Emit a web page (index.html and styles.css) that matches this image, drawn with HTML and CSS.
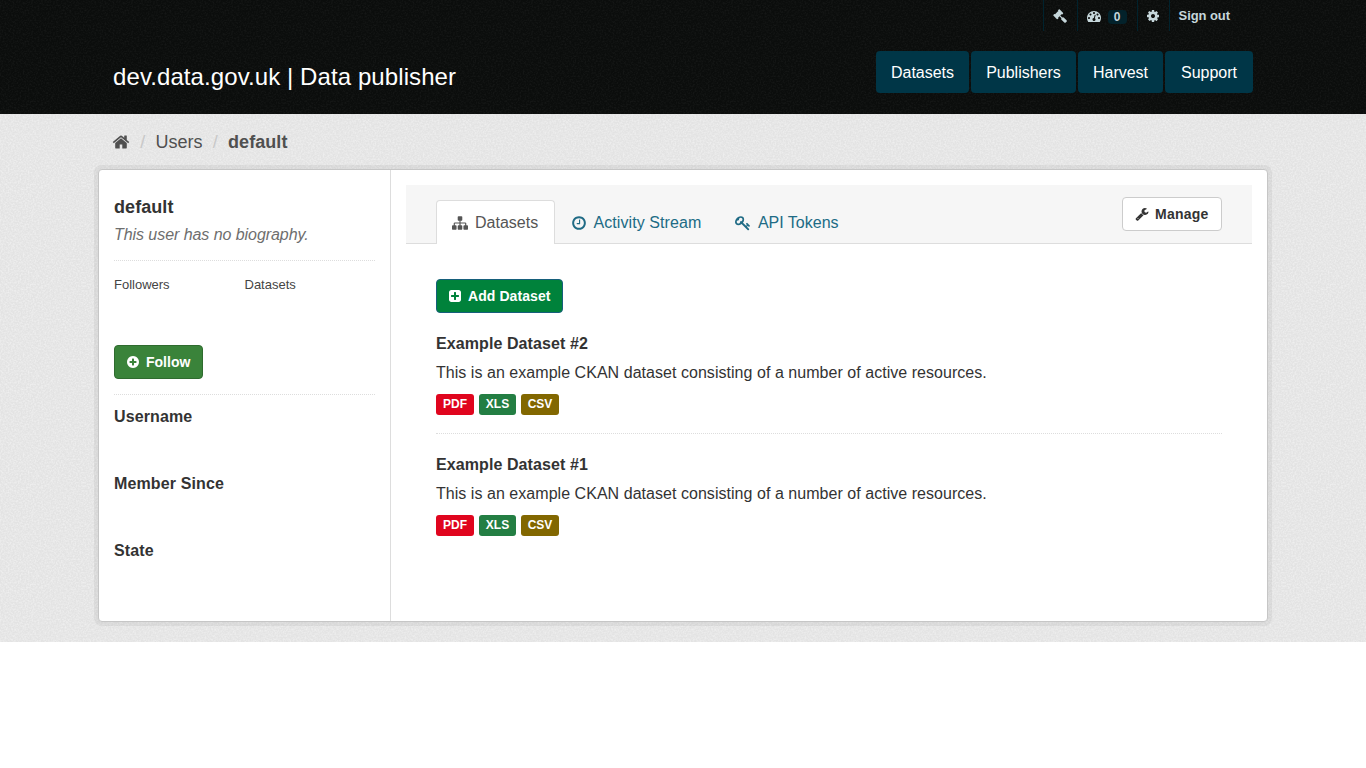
FILE: index.html
```html
<!DOCTYPE html>
<html lang="en">
<head>
<meta charset="utf-8">
<title>default - Users - dev.data.gov.uk | Data publisher</title>
<link rel="stylesheet" href="styles.css">
</head>
<body>
<div class="account">
  <ul class="container account-links">
    <li><a><svg class="icon i14" viewBox="0 0 1792 1792"><path d="M1771 1536q0 53-37 90l-107 108q-39 37-91 37-53 0-90-37l-363-364q-38-36-38-90 0-53 43-96l-256-256-126 126q-14 14-34 14t-34-14q2 2 12.500 12t12.500 13 10 11.500 10 13.500 6 13.500 5.500 16.500 1.500 18q0 38-28 68-3 3-16.500 18t-19 20.500-18.500 16.500-22 15.500-22 9-26 4.500q-40 0-68-28l-408-408q-28-28-28-68 0-13 4.500-26t9-22 15.500-22 16.500-18.500 20.500-19 18-16.500q30-28 68-28 10 0 18 1.500t16.500 5.500 13.500 6 13.500 10 11.500 10 13 12.500 12 12.500q-14-14-14-34t14-34l348-348q14-14 34-14t34 14q-2-2-12.500-12t-12.500-13-10-11.500-10-13.500-6-13.500-5.500-16.500-1.500-18q0-38 28-68 3-3 16.500-18t19-20.500 18.500-16.500 22-15.500 22-9 26-4.500q40 0 68 28l408 408q28 28 28 68 0 13-4.500 26t-9 22-15.500 22-16.500 18.500-20.500 19-18 16.500q-30 28-68 28-10 0-18-1.500t-16.500-5.500-13.500-6-13.500-10-11.500-10-13-12.500-12-12.500q14 14 14 34t-14 34l-126 126 256 256q43-43 96-43 52 0 91 37l363 363q37 39 37 91z"/></svg></a></li>
    <li class="dash"><a><svg class="icon i14" viewBox="0 0 1792 1792"><path d="M384 1152q0-53-37.500-90.500t-90.500-37.500-90.500 37.500-37.500 90.500 37.500 90.500 90.500 37.500 90.500-37.500 37.500-90.500zm192-448q0-53-37.500-90.500t-90.500-37.500-90.500 37.500-37.500 90.500 37.500 90.500 90.500 37.500 90.500-37.500 37.500-90.500zm428 481l101-382q6-26-7.500-48.500t-38.500-29.500-48 6.500-30 39.500l-101 382q-60 5-107 43.500t-63 98.500q-20 77 20 146t117 89 146-20 89-117q16-60-6-117t-72-91zm660-33q0-53-37.500-90.500t-90.500-37.500-90.500 37.500-37.500 90.500 37.500 90.500 90.500 37.500 90.500-37.500 37.500-90.500zm-640-640q0-53-37.500-90.500t-90.500-37.500-90.500 37.500-37.500 90.500 37.500 90.500 90.500 37.500 90.500-37.500 37.500-90.500zm448 192q0-53-37.500-90.500t-90.500-37.500-90.500 37.500-37.500 90.500 37.500 90.500 90.500 37.500 90.500-37.500 37.500-90.500zm320 448q0 261-141 483-19 29-54 29h-1402q-35 0-54-29-141-221-141-483 0-182 71-348t191-286 286-191 348-71 348 71 286 191 191 286 71 348z"/></svg><span class="count">0</span></a></li>
    <li class="settings"><a><svg class="icon i14" viewBox="0 0 1792 1792"><path d="M1152 896q0-106-75-181t-181-75-181 75-75 181 75 181 181 75 181-75 75-181zm512-109v222q0 12-8 23t-20 13l-185 28q-19 54-39 91 35 50 107 138 10 12 10 25t-9 23q-27 37-99 108t-94 71q-12 0-26-9l-138-108q-44 23-91 38-16 136-29 186-7 28-36 28h-222q-14 0-24.500-8.500t-11.500-21.500l-28-184q-49-16-90-37l-141 107q-10 9-25 9-14 0-25-11-126-114-165-168-7-10-7-23 0-12 8-23 15-21 51-66.500t54-70.500q-27-50-41-99l-183-27q-13-2-21-12.500t-8-23.500v-222q0-12 8-23t19-13l186-28q14-46 39-92-40-57-107-138-10-12-10-24 0-10 9-23 26-36 98.500-107.500t94.500-71.500q13 0 26 10l138 107q44-23 91-38 16-136 29-186 7-28 36-28h222q14 0 24.500 8.500t11.500 21.500l28 184q49 16 90 37l142-107q9-9 24-9 13 0 25 10 129 119 165 170 7 8 7 22 0 12-8 23-15 21-51 66.500t-54 70.500q26 50 41 98l183 28q13 2 21 12.500t8 23.500z"/></svg></a></li>
    <li><a class="signout">Sign out</a></li>
  </ul>
</div>
<header class="masthead">
  <div class="container masthead-row">
    <a class="brand">dev.data.gov.uk | Data publisher</a>
    <nav class="nav-pills">
      <a class="p1">Datasets</a><a class="p2">Publishers</a><a class="p3">Harvest</a><a class="p4">Support</a>
    </nav>
  </div>
</header>
<main class="main">
  <div class="container">
    <ol class="breadcrumb">
      <li class="bc-home"><svg class="icon i18" viewBox="0 0 1792 1792"><path d="M1472 992v480q0 26-19 45t-45 19h-384v-384h-256v384h-384q-26 0-45-19t-19-45v-480q0-1 .5-3t.5-3l575-474 575 474q1 2 1 6zm223-69l-62 74q-8 9-21 11h-3q-13 0-21-7l-692-577-692 577q-12 8-24 7-13-2-21-11l-62-74q-8-10-7-23.500t11-21.500l719-599q32-26 76-26t76 26l244 204v-195q0-14 9-23t23-9h192q14 0 23 9t9 23v408l219 182q10 8 11 21.500t-7 23.500z"/></svg></li>
      <li class="sep">/</li>
      <li class="bc-users">Users</li>
      <li class="sep">/</li>
      <li class="bc-active">default</li>
    </ol>
  </div>
  <div class="wrapper">
    <aside class="sidebar">
      <h1 class="user-name">default</h1>
      <p class="bio">This user has no biography.</p>
      <div class="nums"><span>Followers</span><span>Datasets</span></div>
      <a class="btn btn-follow"><svg class="icon i14" viewBox="0 0 1792 1792"><path d="M1344 960v-128q0-26-19-45t-45-19h-256v-256q0-26-19-45t-45-19h-128q-26 0-45 19t-19 45v256h-256q-26 0-45 19t-19 45v128q0 26 19 45t45 19h256v256q0 26 19 45t45 19h128q26 0 45-19t19-45v-256h256q26 0 45-19t19-45zm320-64q0 209-103 385.500t-279.500 279.500-385.500 103-385.500-103-279.500-279.500-103-385.500 103-385.500 279.500-279.500 385.500-103 385.500 103 279.500 279.500 103 385.500z"/></svg><span>Follow</span></a>
      <dl class="info">
        <dt class="t-username">Username</dt>
        <dt class="t-member">Member Since</dt>
        <dt class="t-state">State</dt>
      </dl>
    </aside>
    <section class="primary">
      <div class="page-header">
        <ul class="tabs">
          <li class="active"><svg class="icon i16" viewBox="0 0 1792 1792"><path d="M1792 1248v320q0 40-28 68t-68 28h-320q-40 0-68-28t-28-68v-320q0-40 28-68t68-28h96v-192h-512v192h96q40 0 68 28t28 68v320q0 40-28 68t-68 28h-320q-40 0-68-28t-28-68v-320q0-40 28-68t68-28h96v-192h-512v192h96q40 0 68 28t28 68v320q0 40-28 68t-68 28h-320q-40 0-68-28t-28-68v-320q0-40 28-68t68-28h96v-192q0-52 38-90t90-38h512v-192h-96q-40 0-68-28t-28-68v-320q0-40 28-68t68-28h320q40 0 68 28t28 68v320q0 40-28 68t-68 28h-96v192h512q52 0 90 38t38 90v192h96q40 0 68 28t28 68z"/></svg><span class="tab-ds">Datasets</span></li>
          <li class="activity"><svg class="icon i16" viewBox="0 0 1792 1792"><path d="M1024 544v448q0 14-9 23t-23 9h-320q-14 0-23-9t-9-23v-64q0-14 9-23t23-9h224v-352q0-14 9-23t23-9h64q14 0 23 9t9 23zm416 352q0-148-73-273t-198-198-273-73-273 73-198 198-73 273 73 273 198 198 273 73 273-73 198-198 73-273zm224 0q0 209-103 385.500t-279.500 279.500-385.500 103-385.500-103-279.500-279.500-103-385.500 103-385.500 279.500-279.500 385.500-103 385.500 103 279.500 279.500 103 385.500z"/></svg><span class="tab-as">Activity Stream</span></li>
          <li class="tokens"><svg class="icon i16" viewBox="0 0 1792 1792"><path d="M832 512q0-80-56-136t-136-56-136 56-56 136q0 42 19 83-41-19-83-19-80 0-136 56t-56 136 56 136 136 56 136-56 56-136q0-42-19-83 41 19 83 19 80 0 136-56t56-136zm851 704q0 17-49 66t-66 49q-9 0-28.500-16t-36.500-33-38.500-40-24.500-26l-96 96 220 220q28 28 28 68 0 42-39 81t-81 39q-40 0-68-28l-671-671q-176 131-365 131-163 0-265.500-102.500t-102.500-265.500q0-160 95-313t248-248 313-95q163 0 265.500 102.500t102.500 265.500q0 189-131 365l355 355 96-96q-3-3-26-24.500t-40-38.500-33-36.500-16-28.500q0-17 49-66t66-49q13 0 23 10 6 6 46 44.500t82 79.500 86.500 86 73 78 28.500 41z"/></svg><span class="tab-api">API Tokens</span></li>
        </ul>
        <a class="btn btn-manage"><svg class="icon i14" viewBox="0 0 1792 1792"><path d="M448 1472q0-26-19-45t-45-19-45 19-19 45 19 45 45 19 45-19 19-45zm644-420l-682 682q-37 37-90 37-52 0-91-37l-106-108q-38-36-38-90 0-53 38-91l681-681q39 98 114.500 173.500t173.500 114.500zm634-435q0 39-23 106-47 134-164.500 217.500t-258.500 83.500q-185 0-316.500-131.500t-131.500-316.500 131.500-316.500 316.500-131.500q58 0 121.500 16.500t107.500 46.500q16 11 16 28t-16 28l-293 169v224l193 107q5-3 79-48.500t135.500-81 70.500-35.500q15 0 23.500 10t8.500 25z"/></svg><span>Manage</span></a>
      </div>
      <div class="content">
        <a class="btn btn-add"><svg class="icon i14" viewBox="0 0 1792 1792"><path d="M1408 960v-128q0-26-19-45t-45-19h-320v-320q0-26-19-45t-45-19h-128q-26 0-45 19t-19 45v320h-320q-26 0-45 19t-19 45v128q0 26 19 45t45 19h320v320q0 26 19 45t45 19h128q26 0 45-19t19-45v-320h320q26 0 45-19t19-45zm256-544v960q0 119-84.500 203.500t-203.500 84.500h-960q-119 0-203.500-84.500t-84.500-203.500v-960q0-119 84.500-203.500t203.500-84.500h960q119 0 203.500 84.500t84.500 203.500z"/></svg><span>Add Dataset</span></a>
        <article class="dataset">
          <h2>Example Dataset #2</h2>
          <p>This is an example CKAN dataset consisting of a number of active resources.</p>
          <div class="labels"><span class="pdf">PDF</span><span class="xls">XLS</span><span class="csv">CSV</span></div>
        </article>
        <article class="dataset">
          <h2>Example Dataset #1</h2>
          <p>This is an example CKAN dataset consisting of a number of active resources.</p>
          <div class="labels"><span class="pdf">PDF</span><span class="xls">XLS</span><span class="csv">CSV</span></div>
        </article>
      </div>
    </section>
  </div>
</main>
</body>
</html>
```
FILE: styles.css
```css
* { box-sizing: border-box; }
body { margin: 0; background: #fff; color: #333; font: 16px/20px "Liberation Sans", Arial, sans-serif; }
ul, ol, dl, h1, h2, p { margin: 0; padding: 0; list-style: none; }
.icon { fill: currentColor; flex: none; display: block; }
.i14 { width: 14px; height: 14px; }
.i16 { width: 16px; height: 16px; }
.i18 { width: 18px; height: 18px; }
.container { width: 1140px; margin: 0 auto; }

/* speckled paper texture shared by the dark and light bands */
.account, .masthead { background: #0b0d0c url("data:image/svg+xml,%3Csvg xmlns='http://www.w3.org/2000/svg' width='100' height='100'%3E%3Cfilter id='n'%3E%3CfeTurbulence type='fractalNoise' baseFrequency='.6' numOctaves='2' stitchTiles='stitch'/%3E%3CfeColorMatrix values='0 0 0 0 1 0 0 0 0 1 0 0 0 0 1 .1 0 0 0 -.042'/%3E%3C/filter%3E%3Crect width='100' height='100' filter='url(%23n)'/%3E%3C/svg%3E"); }
.main { background: #e3e3e3 url("data:image/svg+xml,%3Csvg xmlns='http://www.w3.org/2000/svg' width='100' height='100'%3E%3Cfilter id='n'%3E%3CfeTurbulence type='fractalNoise' baseFrequency='.6' numOctaves='2' stitchTiles='stitch'/%3E%3CfeColorMatrix values='0 0 0 0 1 0 0 0 0 1 0 0 0 0 1 .9 0 0 0 -.32'/%3E%3C/filter%3E%3Crect width='100' height='100' filter='url(%23n)'/%3E%3C/svg%3E"); }

.account { height: 31px; color: #c6d7db; }
.account-links { display: flex; justify-content: flex-end; height: 31px; padding-right: 13px; }
.account-links li { border-left: 1px solid #00232e; }
.account-links a { display: flex; align-items: center; height: 31px; padding: 0 10px 0 9px; font-size: 13px; font-weight: bold; }
.account-links .dash a { width: 59px; }
.account-links .settings a { padding: 0 8.5px; }
.account-links .signout { letter-spacing: -.07px; }
.count { margin-left: 7px; width: 19px; height: 14px; margin-top: 2px; border-radius: 4px; background: #03222b; font-size: 12px; line-height: 15px; text-align: center; }

.masthead { height: 83px; padding-top: 20px; }
.masthead-row { display: flex; justify-content: space-between; }
.brand { color: #fff; font-size: 24px; line-height: 32px; padding-top: 10px; letter-spacing: .09px; }
.nav-pills { display: flex; gap: 2px; }
.nav-pills a { height: 42px; line-height: 44px; border-radius: 4px; background: #003647; color: #fff; text-align: center; }
.nav-pills .p1 { width: 93px; }
.nav-pills .p2 { width: 105px; }
.nav-pills .p3 { width: 85px; }
.nav-pills .p4 { width: 88px; }

.main { height: 528px; padding-top: 17px; }
.breadcrumb { display: flex; align-items: center; height: 22px; font-size: 18px; line-height: 22px; color: #505050; }
.breadcrumb .sep { width: 25.5px; text-align: center; color: #c8c8c8; }
.bc-home { width: 17px; }
.bc-home .icon { margin-left: -1px; }
.bc-active { font-weight: bold; letter-spacing: .07px; }

.wrapper { width: 1170px; height: 453px; margin: 16px auto 0; display: flex; background: #fff; border: 1px solid #c6c6c6; border-radius: 4px; box-shadow: 0 0 0 4px rgba(0, 0, 0, .05); }
.sidebar { width: 292px; border-right: 1px solid #ddd; padding: 25px 15px 0; }
.user-name { font-size: 18px; line-height: 24px; letter-spacing: .07px; }
.bio { font-style: italic; color: #6e6e6e; line-height: 22px; letter-spacing: -.06px; padding: 5px 0 14px; border-bottom: 1px dotted #ddd; }
.nums { display: flex; padding-top: 14px; font-size: 13px; line-height: 20px; color: #444; }
.nums span { width: 130.5px; }
.btn { display: inline-flex; align-items: center; gap: 6px; height: 34px; padding: 0 11px; border: 1px solid; border-radius: 4px; font-size: 14px; font-weight: bold; white-space: nowrap; }
.btn-follow { width: 89px; margin-top: 50px; background: #3a833a; border-color: #2f6b2f; color: #fff; }
.info { margin-top: 15px; border-top: 1px dotted #ddd; padding-top: 11px; }
.info dt { font-weight: bold; line-height: 22px; height: 67px; letter-spacing: .12px; }

.primary { flex: 1; padding: 15px 15px 0; }
.page-header { display: flex; align-items: flex-start; justify-content: space-between; height: 59px; padding: 0 30px; background: #f6f6f6; border-bottom: 1px solid #ddd; }
.tabs { display: flex; padding-top: 15px; color: #206b85; }
.tabs li { display: flex; align-items: center; gap: 7px; height: 44px; padding: 1px 15px 0; white-space: nowrap; }
.tabs .active { width: 119px; background: #fff; color: #555; border: 1px solid #ddd; border-bottom: 0; border-radius: 4px 4px 0 0; padding-top: 0; }
.tabs .activity { margin-left: 1px; }
.tab-as { letter-spacing: .08px; }
.tabs .activity, .tabs .tokens { gap: 6.5px; }
.tabs .tokens { margin-left: 4px; }
.btn-manage { width: 100px; margin-top: 12px; padding-left: 12px; background: #fff; border-color: #ccc; color: #333; letter-spacing: .25px; }
.content { padding: 35px 30px 0; }
.btn-add { width: 127px; background: #00823b; border-color: #165f7b; color: #fff; letter-spacing: .08px; }
.dataset { padding: 20px 0; height: 121px; border-bottom: 1px dotted #ddd; }
.dataset:last-child { border-bottom: 0; }
.dataset h2 { font-size: 16px; line-height: 21px; letter-spacing: .09px; }
.dataset p { margin-top: 9px; line-height: 20px; letter-spacing: .04px; }
.labels { display: flex; gap: 5px; margin-top: 11px; }
.labels span { height: 21px; border-radius: 3px; color: #fff; font-size: 12px; font-weight: bold; line-height: 20px; text-align: center; }
.labels .pdf { width: 38px; background: #e0051e; }
.labels .xls { width: 37px; background: #237e43; }
.labels .csv { width: 38px; background: #826700; }
```
